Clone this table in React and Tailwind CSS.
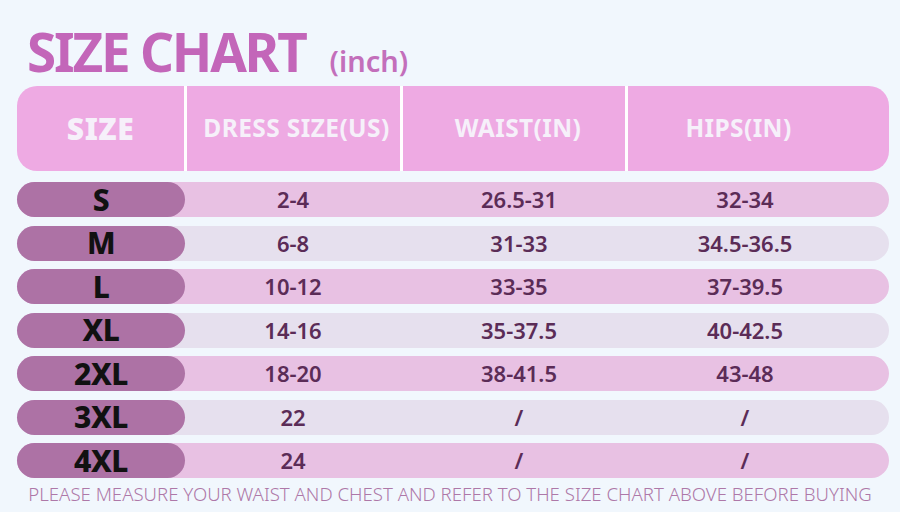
import React from "react";

const rows = [
  ["S", "2-4", "26.5-31", "32-34"],
  ["M", "6-8", "31-33", "34.5-36.5"],
  ["L", "10-12", "33-35", "37-39.5"],
  ["XL", "14-16", "35-37.5", "40-42.5"],
  ["2XL", "18-20", "38-41.5", "43-48"],
  ["3XL", "22", "/", "/"],
  ["4XL", "24", "/", "/"],
];

export default function App() {
  return (
    <div className="w-[900px] h-[512px] overflow-hidden bg-[#f1f7fd] font-['Noto_Sans',sans-serif] pl-[17px] pr-[11px] pt-[25px]">
      <div className="flex items-baseline ml-[10px] h-[53px] leading-none">
        <span className="text-[53px] font-bold text-[#c366b9] tracking-[-2.2px]">SIZE CHART</span>
        <span className="ml-[24px] text-[29px] font-semibold text-[#c36fbb]">(inch)</span>
      </div>
      <div className="mt-[8px] h-[85px] rounded-[20px] bg-[#eeaae3] flex text-[#f6f0fa] overflow-hidden">
        <div className="w-[167px] flex items-center justify-center text-[30px] font-black tracking-[0.5px]">SIZE</div>
        <div className="w-[3px] bg-white"></div>
        <div className="w-[213px] flex items-center justify-center pl-[6px] text-[24.5px] font-bold tracking-[0.4px]">DRESS SIZE(US)</div>
        <div className="w-[3px] bg-white"></div>
        <div className="w-[222px] flex items-center justify-center pl-[8px] text-[24.5px] font-bold tracking-[0.4px]">WAIST(IN)</div>
        <div className="w-[3px] bg-white"></div>
        <div className="flex-1 flex items-center justify-center pr-[40px] text-[24.5px] font-bold tracking-[0.4px]">HIPS(IN)</div>
      </div>
      <div className="mt-[11px] flex flex-col gap-[8.5px]">
        {rows.map((r, i) => (
          <div
            key={r[0]}
            className={
              "h-[35px] rounded-full flex items-center " +
              (i % 2 === 0 ? "bg-[#e8c1e3]" : "bg-[#e6e0ee]")
            }
          >
            <div className="w-[168px] h-full rounded-full bg-[#ad72a5] flex items-center justify-center text-[30px] font-extrabold text-[#111] leading-none tracking-[-0.5px]">
              {r[0]}
            </div>
            <div className="w-[216px] text-center text-[22px] font-semibold text-[#5b2c57]">{r[1]}</div>
            <div className="w-[236px] text-center text-[22px] font-semibold text-[#5b2c57]">{r[2]}</div>
            <div className="w-[216px] text-center text-[22px] font-semibold text-[#5b2c57]">{r[3]}</div>
          </div>
        ))}
      </div>
      <div className="mt-[5px] -ml-[6px] text-center text-[18.6px] font-light text-[#ae78a8] leading-[22px] whitespace-nowrap">
        PLEASE MEASURE YOUR WAIST AND CHEST AND REFER TO THE SIZE CHART ABOVE BEFORE BUYING
      </div>
    </div>
  );
}
